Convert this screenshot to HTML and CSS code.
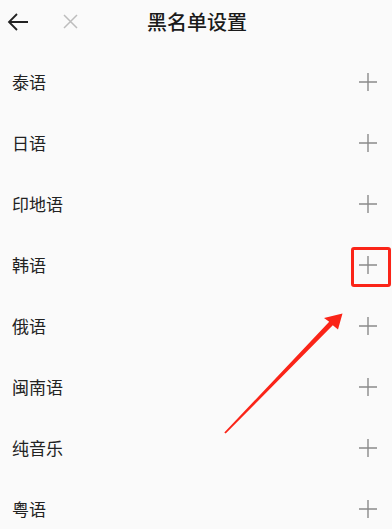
FILE: index.html
```html
<!DOCTYPE html>
<html lang="zh-CN">
<head>
  <meta charset="UTF-8" />
  <meta name="viewport" content="width=device-width, initial-scale=1.0"/>
  <title>黑名单设置</title>
  <link rel="stylesheet" href="styles.css">
</head>
<body>

  <!-- Top bar -->
  <div class="topbar">
    <span class="back">
      <svg width="22" height="18" viewBox="0 0 22 18"><path d="M21 9H2M10 1L2 9l8 8" fill="none" stroke="#222" stroke-width="1.8"/></svg>
    </span>
    <span class="close">
      <svg width="15" height="15" viewBox="0 0 15 15"><path d="M1 1l13 13M14 1L1 14" fill="none" stroke="#bdbdbd" stroke-width="1.5"/></svg>
    </span>
    <div class="title">黑名单设置</div>
  </div>

  <!-- Language list -->
  <ul class="list">
    <li class="row"><span class="name">泰语</span><span class="add"></span></li>
    <li class="row"><span class="name">日语</span><span class="add"></span></li>
    <li class="row"><span class="name">印地语</span><span class="add"></span></li>
    <li class="row"><span class="name">韩语</span><span class="add marked"></span></li>
    <li class="row"><span class="name">俄语</span><span class="add"></span></li>
    <li class="row"><span class="name">闽南语</span><span class="add"></span></li>
    <li class="row"><span class="name">纯音乐</span><span class="add"></span></li>
    <li class="row"><span class="name">粤语</span><span class="add"></span></li>
  </ul>

  <!-- Annotation arrow -->
  <svg class="pointer" width="392" height="529" viewBox="0 0 392 529">
    <polygon points="224.3,432.6 329.2,321.7 324,318 342.5,313.5 338,329.5 332.8,325.3 225.7,433.6" fill="#fa2418"/>
  </svg>

  <script>
    // draw the plus glyph into every add button
    document.querySelectorAll('.add').forEach(el => {
      el.innerHTML = '<svg width="18" height="18" viewBox="0 0 18 18"><path d="M0 9h18M9 0v18" stroke="#8a8a8a" stroke-width="1.4"/></svg>';
    });
  </script>

</body>
</html>
```

FILE: styles.css
```css
* {
  box-sizing: border-box;
  margin: 0;
  padding: 0;
}

body {
  font-family: "Noto Sans CJK SC", "Noto Sans", sans-serif;
  background: #fafafa;
  color: #222;
  width: 392px;
  height: 529px;
  overflow: hidden;
  position: relative;
}

.topbar {
  height: 43px;
  display: flex;
  align-items: center;
  padding-left: 7px;
  position: relative;
}

.back {
  display: flex;
  width: 22px;
  height: 18px;
}

.close {
  display: flex;
  margin-left: 34px;
}

.title {
  position: absolute;
  left: 0;
  right: 0;
  top: 0;
  line-height: 43px;
  text-align: center;
  font-size: 20px;
  font-weight: 500;
  color: #1a1a1a;
  pointer-events: none;
  padding-left: 2px;
}

.list {
  list-style: none;
  padding-top: 8px;
}

.row {
  height: 61px;
  display: flex;
  align-items: center;
  justify-content: space-between;
  padding: 0 14px 0 12px;
}

.name {
  font-size: 17px;
  color: #222;
}

.add {
  display: flex;
  width: 18px;
  height: 18px;
  margin-right: 1px;
  position: relative;
}

.add.marked::after {
  content: "";
  position: absolute;
  left: -8px;
  top: -9px;
  width: 34px;
  height: 34px;
  border: 3px solid #fa2418;
  border-radius: 3px;
}

.pointer {
  position: absolute;
  left: 0;
  top: 0;
  pointer-events: none;
}
```
